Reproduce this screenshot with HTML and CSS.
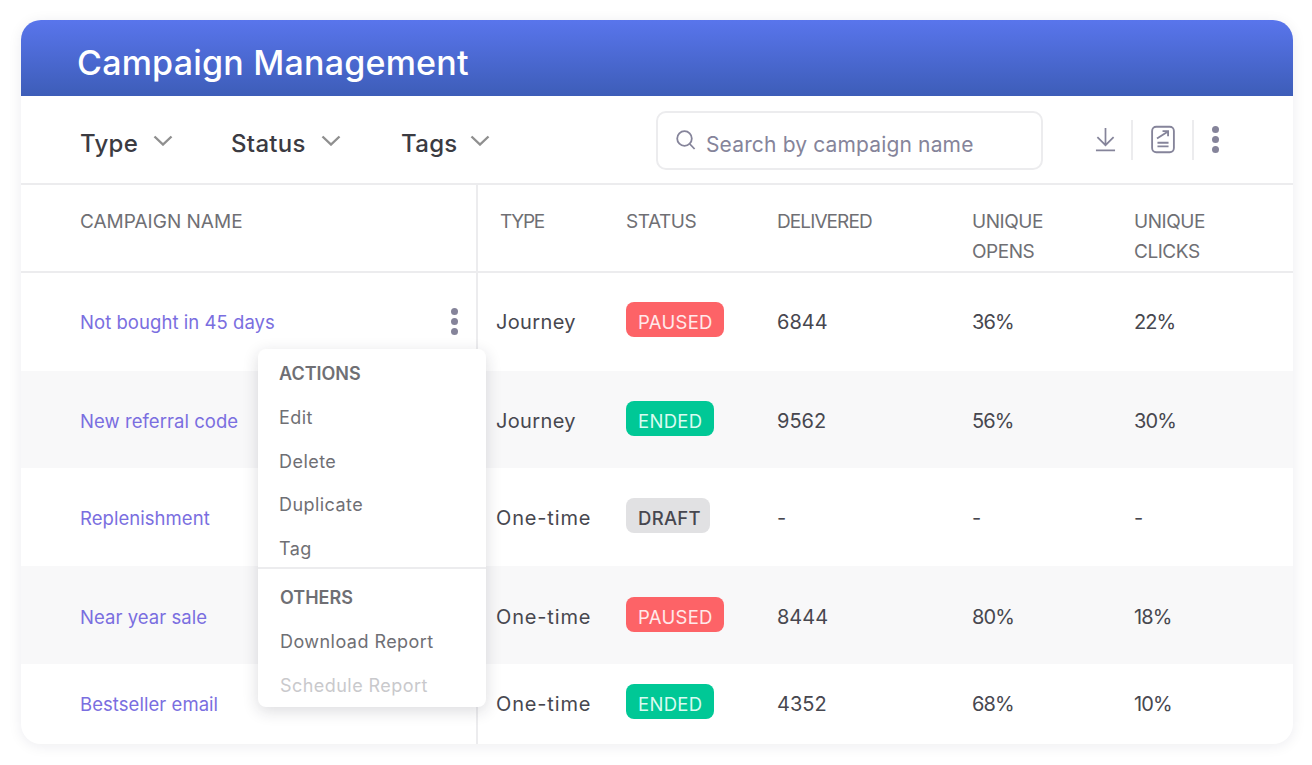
FILE: index.html
```html
<!DOCTYPE html>
<html lang="en">
<head>
<meta charset="utf-8">
<title>Campaign Management</title>
<link rel="stylesheet" href="styles.css">
</head>
<body>
<main class="card">
  <header class="banner"><h1 class="title">Campaign Management</h1></header>
  <section class="toolbar">
    <div class="filters">
      <div class="filter filter-type"><span>Type</span><svg class="chev" viewBox="0 0 20 11"><path d="M1.5 1.5 10 9.5 18.5 1.5"/></svg></div>
      <div class="filter filter-status"><span>Status</span><svg class="chev" viewBox="0 0 20 11"><path d="M1.5 1.5 10 9.5 18.5 1.5"/></svg></div>
      <div class="filter filter-tags"><span>Tags</span><svg class="chev" viewBox="0 0 20 11"><path d="M1.5 1.5 10 9.5 18.5 1.5"/></svg></div>
    </div>
    <div class="search">
      <svg class="search-icon" viewBox="0 0 20 20"><circle cx="8.5" cy="8.5" r="7.3"/><path d="M13.8 14 18.6 19"/></svg>
      <span>Search by campaign name</span>
    </div>
    <div class="tools">
      <svg class="tool tool-down" viewBox="0 0 22 26"><path d="M11 1V19M2.5 10.5 11 19 19.5 10.5M1 24.5H21"/></svg>
      <i class="sep"></i>
      <svg class="tool tool-report" viewBox="0 0 26 30"><rect x="1.2" y="1.2" width="23.6" height="27.6" rx="4.5"/><path d="M6.5 14 18 6.5M12.5 6H18.5V11.5M7 18.5H19M7 22.5H19"/></svg>
      <i class="sep"></i>
      <div class="dots dots-tool"><i></i><i></i><i></i></div>
    </div>
  </section>
  <div class="row head">
    <div class="cell name-cell">CAMPAIGN NAME</div>
    <div class="cell type-head tight">TYPE</div>
    <div class="cell">STATUS</div>
    <div class="cell tight">DELIVERED</div>
    <div class="cell">UNIQUE<br>OPENS</div>
    <div class="cell">UNIQUE<br>CLICKS</div>
  </div>
  <div class="row body h98">
    <div class="cell name-cell"><a class="link">Not bought in 45 days</a><div class="dots"><i></i><i></i><i></i></div></div>
    <div class="cell type-cell">Journey</div>
    <div class="cell"><span class="badge paused">PAUSED</span></div>
    <div class="cell">6844</div><div class="cell pct">36%</div><div class="cell pct">22%</div>
  </div>
  <div class="row body alt h97 nudge1">
    <div class="cell name-cell"><a class="link">New referral code</a></div>
    <div class="cell type-cell">Journey</div>
    <div class="cell"><span class="badge ended">ENDED</span></div>
    <div class="cell">9562</div><div class="cell pct">56%</div><div class="cell pct">30%</div>
  </div>
  <div class="row body h98 nudge1">
    <div class="cell name-cell"><a class="link">Replenishment</a></div>
    <div class="cell type-cell wide">One-time</div>
    <div class="cell"><span class="badge draft">DRAFT</span></div>
    <div class="cell">-</div><div class="cell">-</div><div class="cell">-</div>
  </div>
  <div class="row body alt h98 nudge2">
    <div class="cell name-cell"><a class="link">Near year sale</a></div>
    <div class="cell type-cell wide">One-time</div>
    <div class="cell"><span class="badge paused">PAUSED</span></div>
    <div class="cell">8444</div><div class="cell pct">80%</div><div class="cell pct">18%</div>
  </div>
  <div class="row body h80">
    <div class="cell name-cell"><a class="link">Bestseller email</a></div>
    <div class="cell type-cell wide">One-time</div>
    <div class="cell"><span class="badge ended">ENDED</span></div>
    <div class="cell">4352</div><div class="cell pct">68%</div><div class="cell pct">10%</div>
  </div>
  <div class="menu">
    <div class="menu-group first">
      <div class="menu-item menu-title">ACTIONS</div>
      <div class="menu-item">Edit</div>
      <div class="menu-item">Delete</div>
      <div class="menu-item">Duplicate</div>
      <div class="menu-item">Tag</div>
    </div>
    <div class="menu-group second">
      <div class="menu-item menu-title">OTHERS</div>
      <div class="menu-item">Download Report</div>
      <div class="menu-item disabled">Schedule Report</div>
    </div>
  </div>
</main>
</body>
</html>
```
FILE: styles.css
```css
* { box-sizing: border-box; }
html, body { margin: 0; height: 100%; background: #fff; }
body { padding: 20px 19px 21px 21px; font-family: Inter, "Noto Sans", sans-serif; color: #47474f; overflow: hidden; }

.card { position: relative; width: 1272px; height: 724px; background: #fff; border-radius: 20px; box-shadow: 0 2px 14px rgba(30,30,60,.08); }

.banner { height: 76px; border-radius: 20px 20px 0 0; background: linear-gradient(180deg, #5975ec 0%, #3d5db8 100%); display: flex; align-items: center; padding: 10px 0 0 56px; }
.title { margin: 0; font-size: 34px; font-weight: 500; color: #fff; letter-spacing: .22px; line-height: 1; }

.toolbar { height: 89px; border-bottom: 2px solid #ececee; display: flex; align-items: center; padding: 1px 0 0 59px; }
.filters { width: 576px; display: flex; align-items: center; font-size: 24px; font-weight: 500; color: #3b3b42; padding-top: 7px; }
.filter { display: flex; align-items: center; gap: 15px; }
.filter span { letter-spacing: .3px; }
.filter-type { width: 151px; }
.filter-status { width: 170px; }
.filter-tags { gap: 12px; }
.chev { width: 20px; height: 11px; fill: none; stroke: #8f8f8f; stroke-width: 2.4; margin-bottom: 6px; }

.search { width: 387px; height: 59px; border: 2px solid #ececee; border-radius: 10px; display: flex; align-items: center; gap: 10px; padding-left: 18px; font-size: 21px; color: #85849a; letter-spacing: .15px; }
.search-icon { width: 20px; height: 20px; fill: none; stroke: #85849a; stroke-width: 1.8; margin-bottom: 1px; }
.search span { padding-top: 8px; }

.tools { display: flex; align-items: center; margin-left: 52px; margin-bottom: 1px; }
.tool { fill: none; stroke: #85849a; }
.tool-down { width: 21px; height: 25px; stroke-width: 1.8; }
.tool-report { width: 24px; height: 29px; stroke-width: 2; }
.sep { width: 2px; height: 40px; background: #ececee; }
.tool-down + .sep { margin: 0 18px 0 15px; }
.tool-report + .sep { margin: 0 18px 0 17px; }

.dots { display: flex; flex-direction: column; gap: 3px; }
.dots i { width: 7px; height: 7px; border-radius: 50%; background: #85849a; }
.name-cell .dots { margin-bottom: 2px; }

.row { display: grid; grid-template-columns: 457px 148px 151px 195px 162px 1fr; }
.cell { display: flex; align-items: center; }
.name-cell { border-right: 2px solid #ececee; padding: 0 18px 0 59px; justify-content: space-between; }

.head { height: 88px; border-bottom: 2px solid #ececee; font-size: 19px; line-height: 30px; color: #6f6f74; }
.head .cell { display: block; padding-top: 22px; }
.head .cell:not(.name-cell) { letter-spacing: -.45px; }
.head .cell.tight { letter-spacing: -.9px; }
.head .cell.type-head { padding-left: 22px; letter-spacing: -1.3px; }

.body { font-size: 20px; }
.h98 { height: 98px; }
.h97 { height: 97px; }
.h80 { height: 80px; }
.nudge1 { padding-top: 2px; }
.nudge2 { padding-top: 4px; }
.alt { background: #f8f8f9; }
.link { color: #7a6ee0; font-size: 18.5px; letter-spacing: .05px; }
.type-cell { padding-left: 18px; letter-spacing: .35px; }
.type-cell.wide { letter-spacing: .85px; }
.pct { letter-spacing: -.9px; }

.badge { display: inline-flex; align-items: center; height: 35px; padding: 5px 12px 0; border-radius: 8px; font-size: 18.5px; margin-bottom: 5px; letter-spacing: .3px; }
.paused { background: #fd6367; color: #ffe9ea; width: 98px; }
.ended { background: #00c896; color: #d9fbf1; width: 88px; }
.draft { background: #e1e1e3; color: #47474f; width: 84px; font-weight: 500; }

.menu { position: absolute; left: 237px; top: 329px; width: 228px; height: 358px; background: #fff; border-radius: 8px; box-shadow: 0 4px 16px rgba(30,30,50,.16); font-size: 18px; color: #6f6f74; }
.menu-group.first { height: 220px; padding: 3px 0 0 21px; border-bottom: 2px solid #ececee; }
.menu-group.second { padding: 7px 0 0 22px; }
.menu-item { height: 43.7px; display: flex; align-items: center; letter-spacing: .45px; }
.menu-title { font-weight: 600; letter-spacing: 0; }
.disabled { color: #c9c9cc; }
```
